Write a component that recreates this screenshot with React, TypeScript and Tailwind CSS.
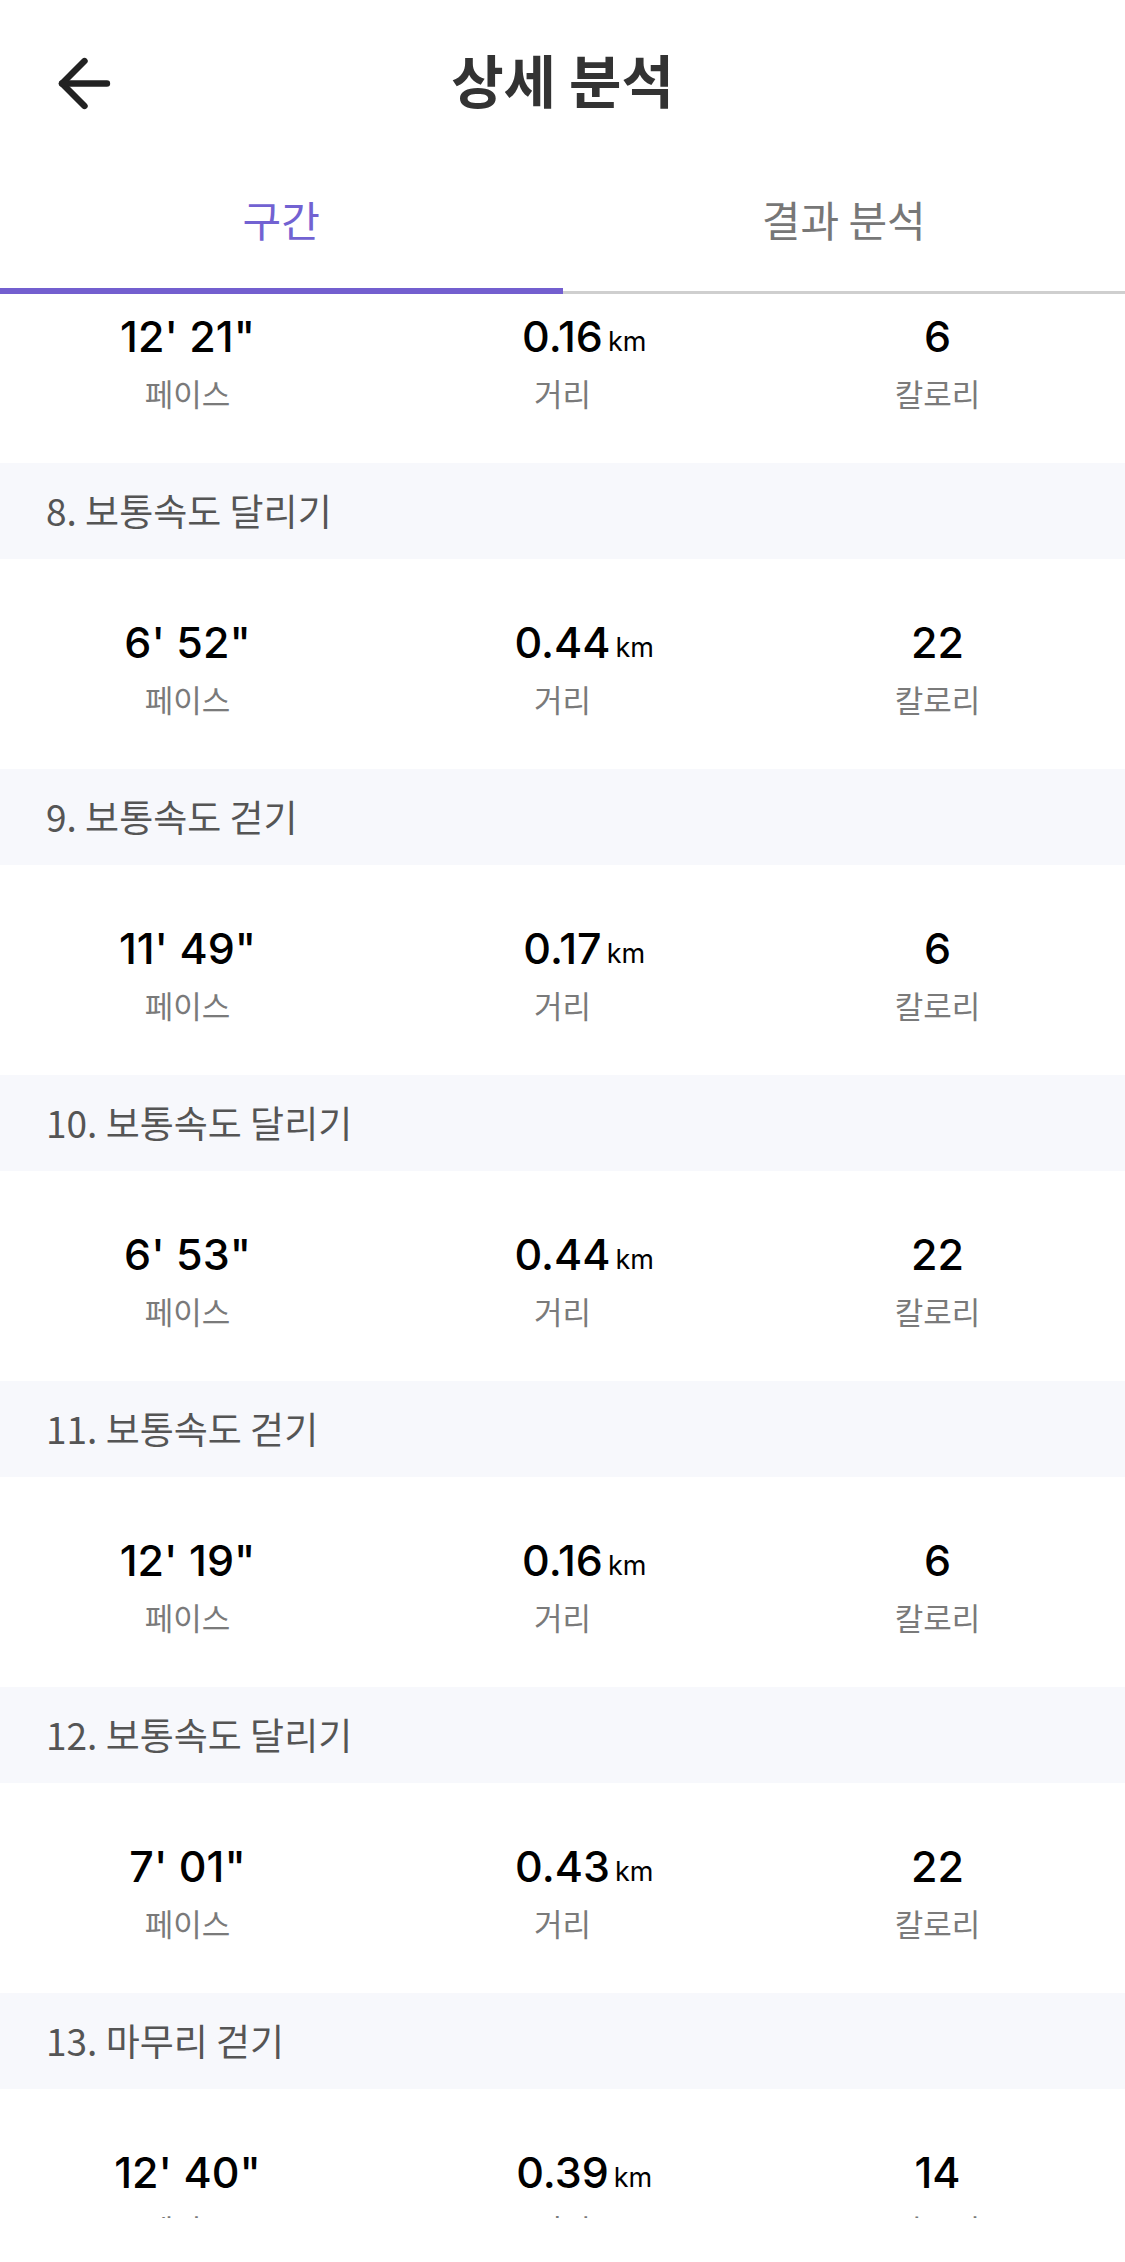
import { ArrowLeft } from 'lucide-react'

type Lap = {
  title?: string
  pace: string
  dist: string
  kcal: string
}

const LAPS: Lap[] = [
  { pace: `12' 21"`, dist: '0.16', kcal: '6' },
  { title: '8. 보통속도 달리기', pace: `6' 52"`, dist: '0.44', kcal: '22' },
  { title: '9. 보통속도 걷기', pace: `11' 49"`, dist: '0.17', kcal: '6' },
  { title: '10. 보통속도 달리기', pace: `6' 53"`, dist: '0.44', kcal: '22' },
  { title: '11. 보통속도 걷기', pace: `12' 19"`, dist: '0.16', kcal: '6' },
  { title: '12. 보통속도 달리기', pace: `7' 01"`, dist: '0.43', kcal: '22' },
  { title: '13. 마무리 걷기', pace: `12' 40"`, dist: '0.39', kcal: '14' },
]

const KR = "font-['Noto_Sans_CJK_KR',sans-serif]"
const NUM = "font-['Inter','Noto_Sans_CJK_KR',sans-serif]"

function Stat({ value, unit, label }: { value: string; unit?: string; label: string }) {
  return (
    <div className="flex flex-col items-center pt-[58px]">
      <div className={`relative h-[50px] leading-[50px] text-black ${NUM}`}>
        <span className="text-[43px] font-medium">{value}</span>
        {/* unit hangs to the right, number stays centred */}
        {unit && (
          <span className="absolute left-full top-[6px] ml-[5px] text-[27px] leading-[50px]">{unit}</span>
        )}
      </div>
      <div className={`mt-[15px] h-[34px] leading-[34px] text-[31px] text-[#7a7a7a] ${KR}`}>
        {label}
      </div>
    </div>
  )
}

export default function App() {
  return (
    <div className="w-[1125px] h-[2262px] bg-white flex flex-col overflow-hidden">
      {/* Header */}
      <div className="relative h-[162px] shrink-0 flex items-center justify-center">
        <button className="absolute left-[46px] top-[45px] text-[#222]">
          <ArrowLeft size={77} strokeWidth={2} />
        </button>
        <h1 className={`text-[57px] font-bold text-[#333] -mt-[4px] ${KR}`}>상세 분석</h1>
      </div>

      {/* Tabs */}
      <div className="shrink-0">
        <div className={`flex h-[126px] pb-[14px] text-[42px] ${KR}`}>
          <div className="flex-1 flex items-center justify-center text-[#7262d2]">구간</div>
          <div className="flex-1 flex items-center justify-center text-[#777]">결과 분석</div>
        </div>
        <div className="flex h-[6px]">
          <div className="flex-1 bg-[#735fcf]" />
          <div className="flex-1 self-end h-[3px] bg-[#cfcfcf]" />
        </div>
      </div>

      {/* Laps */}
      <div className="flex-1 min-h-0 overflow-hidden">
        <div className="-mt-[41px]">
          {LAPS.map((lap, i) => (
            <div key={i}>
              {lap.title && (
                <div className={`h-[96px] bg-[#f7f8fc] flex items-center pl-[46px] text-[37px] text-[#555] ${KR}`}>
                  {lap.title}
                </div>
              )}
              <div className="h-[210px] grid grid-cols-3">
                <Stat value={lap.pace} label="페이스" />
                <Stat value={lap.dist} unit="km" label="거리" />
                <Stat value={lap.kcal} label="칼로리" />
              </div>
            </div>
          ))}
        </div>
      </div>

      {/* bottom safe area */}
      <div className="h-[44px] shrink-0 bg-white" />
    </div>
  )
}
